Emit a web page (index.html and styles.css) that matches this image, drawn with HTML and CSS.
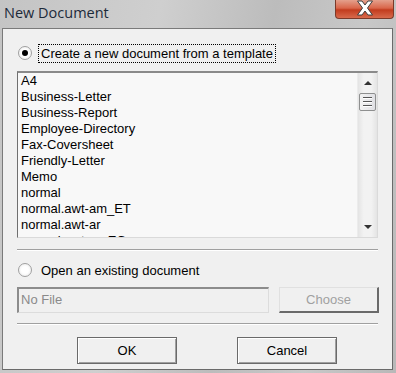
FILE: index.html
```html
<!DOCTYPE html>
<html lang="en">
<head>
    <meta charset="UTF-8">
    <title>New Document</title>
    <link rel="stylesheet" href="styles.css">
</head>
<body>
    <div class="window">
        <div class="titlebar">
            <div class="title">New Document</div>
            <div class="close-button">
                <svg width="20" height="16" viewBox="0 0 20 16">
                    <path d="M2.5 1 L7 1 L10 5 L13 1 L17.5 1 L12.5 8 L17.5 15 L13 15 L10 11 L7 15 L2.5 15 L7.5 8 Z" fill="#ffffff" stroke="#3f3f3f" stroke-width="1"/>
                </svg>
            </div>
        </div>

        <div class="client">
            <!-- template option -->
            <div class="option option-first">
                <span class="radio checked"></span>
                <span class="option-label focused">Create a new document from a template</span>
            </div>

            <div class="listbox">
                <div class="list-items">
                    <div class="list-item">A4</div>
                    <div class="list-item">Business-Letter</div>
                    <div class="list-item">Business-Report</div>
                    <div class="list-item">Employee-Directory</div>
                    <div class="list-item">Fax-Coversheet</div>
                    <div class="list-item">Friendly-Letter</div>
                    <div class="list-item">Memo</div>
                    <div class="list-item">normal</div>
                    <div class="list-item">normal.awt-am_ET</div>
                    <div class="list-item">normal.awt-ar</div>
                    <div class="list-item">normal.awt-ar_EG</div>
                </div>
                <div class="scrollbar">
                    <div class="arrow arrow-up"></div>
                    <div class="thumb">
                        <span></span><span></span><span></span>
                    </div>
                    <div class="track"></div>
                    <div class="arrow arrow-down"></div>
                </div>
            </div>

            <div class="separator separator-first"></div>

            <!-- existing document option -->
            <div class="option option-second">
                <span class="radio"></span>
                <span class="option-label">Open an existing document</span>
            </div>

            <div class="file-row">
                <div class="file-field">No File</div>
                <button class="button choose-button" disabled>Choose</button>
            </div>

            <div class="separator separator-second"></div>

            <div class="footer">
                <button class="button">OK</button>
                <button class="button">Cancel</button>
            </div>
        </div>
    </div>
</body>
</html>
```

FILE: styles.css
```css
body {
    margin: 0;
    font-family: "Liberation Sans", Arial, sans-serif;
    font-size: 13px;
    color: #000000;
}

.window {
    width: 396px;
    height: 373px;
    box-sizing: border-box;
    background: linear-gradient(100deg, #c4c4c4 0%, #cfcfcf 35%, #bcbcbc 60%, #c8c8c8 80%, #b8b8b8 100%);
    display: flex;
    flex-direction: column;
}

.titlebar {
    height: 28px;
    display: flex;
    align-items: flex-start;
    justify-content: space-between;
}

.title {
    font-family: "Open Sans", "Noto Sans", sans-serif;
    font-size: 14.5px;
    color: #1c2a3a;
    margin-top: 3px;
    margin-left: 4px;
}

.close-button {
    width: 57px;
    height: 18px;
    margin-right: 2px;
    border: 1px solid #7b3a2a;
    border-top: none;
    border-radius: 0 0 4px 4px;
    background: linear-gradient(#e4a08c 0%, #d9664a 45%, #c23c1e 55%, #d86a4c 100%);
    display: flex;
    align-items: flex-start;
    justify-content: center;
}

.client {
    flex: 1;
    margin: 0 3px 3px 2px;
    border: 1px solid #7a7a7a;
    border-right-color: #6a6a6a;
    border-bottom-color: #6a6a6a;
    background-color: #f0f0f0;
    padding: 0 14px;
    display: flex;
    flex-direction: column;
}

.option {
    display: flex;
    align-items: center;
    height: 18px;
}

.option-first {
    margin-top: 15px;
}

.option-second {
    margin-top: 10px;
}

.radio {
    width: 12px;
    height: 12px;
    border-radius: 50%;
    border: 1px solid #a0a0a0;
    background: radial-gradient(circle, #ffffff 40%, #e6e6e6 100%);
    margin-left: 1px;
    margin-right: 6px;
    position: relative;
}

.radio.checked::after {
    content: "";
    position: absolute;
    left: 3px;
    top: 3px;
    width: 6px;
    height: 6px;
    border-radius: 50%;
    background-color: #000000;
}

.option-label {
    padding: 1px 2px;
    border: 1px solid transparent;
}

.option-label.focused {
    border: 1px dotted #000000;
}

.listbox {
    margin-top: 9px;
    height: 167px;
    box-sizing: border-box;
    border: 1px solid #dadada;
    border-top: 2px solid #8a8a8a;
    border-left: 1px solid #6f6f6f;
    background-color: #f8f8f8;
    display: flex;
    overflow: hidden;
}

.list-items {
    flex: 1;
    padding: 0 0 0 3px;
    overflow: hidden;
}

.list-item {
    height: 16px;
    line-height: 16px;
    white-space: nowrap;
}

.scrollbar {
    width: 19px;
    background: linear-gradient(90deg, #e4e4e4 0%, #f2f2f2 30%, #f2f2f2 70%, #e4e4e4 100%);
    border-left: 1px solid #ececec;
    display: flex;
    flex-direction: column;
    align-items: center;
}

.arrow {
    width: 0;
    height: 0;
    border-left: 4px solid transparent;
    border-right: 4px solid transparent;
}

.arrow-up {
    margin-top: 8px;
    border-bottom: 4px solid #333333;
}

.arrow-down {
    margin-bottom: 8px;
    border-top: 4px solid #333333;
}

.thumb {
    margin-top: 8px;
    width: 17px;
    height: 18px;
    box-sizing: border-box;
    border: 1px solid #8e8f8f;
    border-radius: 2px;
    background: linear-gradient(90deg, #f2f2f2, #e0e0e4);
    display: flex;
    flex-direction: column;
    align-items: center;
    justify-content: center;
    gap: 2px;
}

.thumb span {
    width: 9px;
    height: 1px;
    background-color: #555555;
    border-bottom: 1px solid #ffffff;
}

.track {
    flex: 1;
}

.separator {
    height: 1px;
    background-color: #a0a0a0;
    border-bottom: 1px solid #ffffff;
}

.separator-first {
    margin-top: 11px;
}

.separator-second {
    margin-top: 10px;
}

.file-row {
    margin-top: 8px;
    display: flex;
    justify-content: space-between;
}

.file-field {
    width: 252px;
    height: 26px;
    box-sizing: border-box;
    border: 1px solid #dcdcdc;
    border-top: 2px solid #8c8c8c;
    border-left: 2px solid #8c8c8c;
    color: #8a8a8a;
    padding: 3px 0 0 2px;
}

.button {
    width: 100px;
    height: 27px;
    box-sizing: border-box;
    font-family: "Liberation Sans", Arial, sans-serif;
    font-size: 13px;
    color: #000000;
    background-color: #f0f0f0;
    border: 1px solid #6a6a6a;
    box-shadow: inset 1px 1px #ffffff, inset -1px -1px #a0a0a0;
    padding: 0;
}

.choose-button {
    height: 26px;
    color: #a0a0a0;
    margin-right: -1px;
    border: 1px solid #e0e0e0;
    border-right: 2px solid #6a6a6a;
    border-bottom: 2px solid #6a6a6a;
    box-shadow: none;
}

.footer {
    margin-top: 12px;
    padding-left: 60px;
    display: flex;
    gap: 60px;
}
```
